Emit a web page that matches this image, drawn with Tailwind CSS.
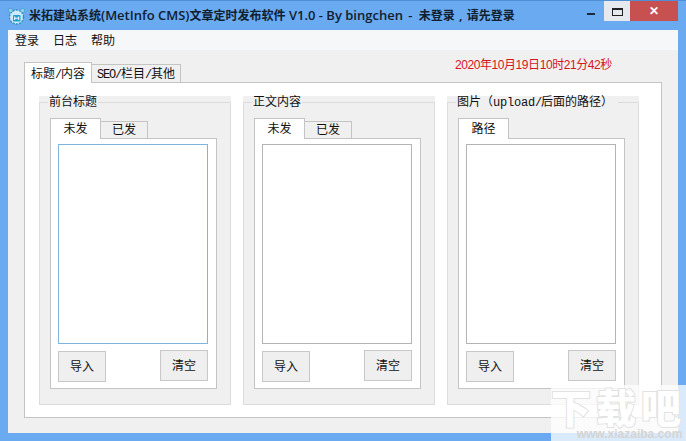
<!DOCTYPE html>
<html lang="zh-CN">
  <head>
    <meta charset="UTF-8" />
    <title>米拓建站系统</title>
    <script src="https://cdn.jsdelivr.net/npm/@tailwindcss/browser@4"></script>
  </head>
  <body class="w-[686px] h-[441px] overflow-hidden relative bg-[#6aaaf0] font-['Liberation_Sans','Noto_Sans_CJK_SC',sans-serif] text-[12px] text-[#111]">
    <!-- title bar -->
    <div class="h-[30px] flex items-start border-t border-[#4f8fd8] pl-[7px]">
      <svg class="w-[19px] h-[19px] mt-[6px] mr-[3px]" viewBox="0 0 19 19">
        <circle cx="9.5" cy="10" r="7" fill="#cfeaf6" stroke="#2f8fc0" stroke-width="1.4" stroke-dasharray="2 1.2" />
        <circle cx="3.5" cy="3.5" r="2.2" fill="#8fd0ea" stroke="#2f8fc0" stroke-width="0.6" />
        <circle cx="15.5" cy="3.5" r="2.2" fill="#8fd0ea" stroke="#2f8fc0" stroke-width="0.6" />
        <rect x="6" y="8" width="7.5" height="6.5" rx="1" fill="#1f9fd8" />
        <path d="M7.7 9.5v3.5M11.7 9.5v3.5M7.7 11.2h4" stroke="#fff" stroke-width="1" />
      </svg>
      <div class="mt-[6px] leading-[17px] font-['Open_Sans','Noto_Sans_CJK_SC',sans-serif] font-semibold text-[12px] text-[#10202f] whitespace-nowrap">米拓建站系统<span class="text-[13px]">(MetInfo CMS)</span>文章定时发布软件<span class="text-[13px]"> V1.0 - By bingchen <span class="ml-[2px]">-</span> </span><span class="ml-[3px]">未登录</span><span class="text-[13px] inline-block w-[12px] text-center">,</span>请先登录</div>
      <div class="ml-auto flex items-start mr-[8px]">
        <div class="w-[27px] h-[20px] flex justify-center"><div class="w-[8px] h-[2px] bg-[#1c2a3a] mt-[12px]"></div></div>
        <div class="w-[26px] h-[20px] bg-[#e6eaee] flex justify-center"><div class="w-[11px] h-[8px] border border-t-2 border-[#222] mt-[7px]"></div></div>
        <div class="w-[48px] h-[20px] bg-[#c75050] flex justify-center text-white text-[12px] leading-[20px] font-bold">✕</div>
      </div>
    </div>

    <!-- client area -->
    <div class="mx-[8px] h-[403px] bg-[#f0f0f0] flex flex-col">
      <div class="h-[20px] bg-[#f6f7f8] flex items-center pl-[7px] pt-[2px] gap-[14px] text-[12px] leading-[18px]">
        <span>登录</span>
        <span>日志</span>
        <span>帮助</span>
      </div>

      <div class="flex-1 px-[16px] pt-[12px] relative">
        <div class="absolute top-[8px] left-[447px] text-[#d8141e] text-[12px] leading-[14px] tracking-[-0.43px] whitespace-nowrap">2020年10月19日10时21分42秒</div>
        <div class="flex items-end h-[21px] relative z-10">
          <div class="w-[68px] h-[21px] bg-white border border-b-0 border-[#c4c4c4] text-center leading-[22px] text-[12px]">标题<span class="font-['Liberation_Mono',monospace] tracking-[-1.2px]">/</span>内容</div>
          <div class="w-[89px] h-[19px] bg-[#f0f0f0] border border-l-0 border-[#c4c4c4] text-center leading-[19px] text-[12px]"><span class="font-['Liberation_Mono',monospace] tracking-[-1.2px]">SEO/</span>栏目<span class="font-['Liberation_Mono',monospace] tracking-[-1.2px]">/</span>其他</div>
        </div>
        <div class="w-[638px] h-[336px] -mt-px bg-white border border-[#c4c4c4] pl-[14px] pt-[13px] flex gap-[12px]">

          <section class="w-[192px] h-[309px] bg-[#f0f0f0] relative px-[11px] pt-[22px]">
            <div class="absolute inset-x-0 top-[6px] bottom-0 border border-[#dcdcdc]"></div>
            <div class="absolute top-0 left-[9px] px-px leading-[13px] text-[12px] bg-[#f0f0f0]">前台标题</div>
            <div class="flex items-end h-[21px] relative z-10">
              <div class="w-[51px] h-[21px] bg-white border border-b-0 border-[#c4c4c4] text-center leading-[21px]">未发</div>
              <div class="w-[47px] h-[18px] bg-[#f0f0f0] border border-l-0 border-[#c4c4c4] text-center leading-[17px]">已发</div>
            </div>
            <div class="relative w-[167px] h-[251px] -mt-px bg-white border border-[#c4c4c4] pl-[7px] pt-[5px]">
              <div class="w-[150px] h-[200px] border border-[#7fb4dc]"></div>
              <div class="w-[150px] flex justify-between items-start mt-[6px]">
                <button class="w-[48px] h-[31px] mt-px bg-[#efefef] border border-[#c8c8c8]">导入</button>
                <button class="w-[48px] h-[31px] bg-[#efefef] border border-[#c8c8c8]">清空</button>
              </div>
            </div>
          </section>

          <section class="w-[192px] h-[309px] bg-[#f0f0f0] relative px-[11px] pt-[22px]">
            <div class="absolute inset-x-0 top-[6px] bottom-0 border border-[#dcdcdc]"></div>
            <div class="absolute top-0 left-[9px] px-px leading-[13px] text-[12px] bg-[#f0f0f0]">正文内容</div>
            <div class="flex items-end h-[21px] relative z-10">
              <div class="w-[51px] h-[21px] bg-white border border-b-0 border-[#c4c4c4] text-center leading-[21px]">未发</div>
              <div class="w-[47px] h-[18px] bg-[#f0f0f0] border border-l-0 border-[#c4c4c4] text-center leading-[17px]">已发</div>
            </div>
            <div class="relative w-[167px] h-[251px] -mt-px bg-white border border-[#c4c4c4] pl-[7px] pt-[5px]">
              <div class="w-[150px] h-[200px] border border-[#b4b4b4]"></div>
              <div class="w-[150px] flex justify-between items-start mt-[6px]">
                <button class="w-[48px] h-[31px] mt-px bg-[#efefef] border border-[#c8c8c8]">导入</button>
                <button class="w-[48px] h-[31px] bg-[#efefef] border border-[#c8c8c8]">清空</button>
              </div>
            </div>
          </section>

          <section class="w-[192px] h-[309px] bg-[#f0f0f0] relative px-[11px] pt-[22px]">
            <div class="absolute inset-x-0 top-[6px] bottom-0 border border-[#dcdcdc]"></div>
            <div class="absolute top-0 left-[9px] pl-px pr-[5px] leading-[13px] text-[12px] bg-[#f0f0f0] whitespace-nowrap">图片（<span class="font-['Liberation_Mono',monospace] tracking-[-0.2px]">upload</span><span class="font-['Liberation_Mono',monospace] tracking-[-1.2px]">/</span>后面的路径）</div>
            <div class="flex items-end h-[21px] relative z-10">
              <div class="w-[51px] h-[21px] bg-white border border-b-0 border-[#c4c4c4] text-center leading-[21px]">路径</div>
            </div>
            <div class="relative w-[167px] h-[251px] -mt-px bg-white border border-[#c4c4c4] pl-[7px] pt-[5px]">
              <div class="w-[150px] h-[200px] border border-[#b4b4b4]"></div>
              <div class="w-[150px] flex justify-between items-start mt-[6px]">
                <button class="w-[48px] h-[31px] mt-px bg-[#efefef] border border-[#c8c8c8]">导入</button>
                <button class="w-[48px] h-[31px] bg-[#efefef] border border-[#c8c8c8]">清空</button>
              </div>
            </div>
          </section>
        </div>
      </div>
    </div>

    <!-- watermark -->
    <div class="absolute left-[551px] top-[385px] w-[135px] h-[56px] bg-white/75 text-white flex flex-col items-center z-20">
      <div class="h-[42px] text-[40px] leading-[42px] tracking-[5px] font-black [-webkit-text-stroke:2px_#e2e2e2] [paint-order:stroke_fill] font-['Noto_Sans_CJK_SC',sans-serif] whitespace-nowrap">下载吧</div>
      <div class="h-[14px] pl-[22px] text-[12px] leading-[14px] font-bold text-[#d4d4d4] whitespace-nowrap">www.xiazaiba.com</div>
    </div>
  </body>
</html>
